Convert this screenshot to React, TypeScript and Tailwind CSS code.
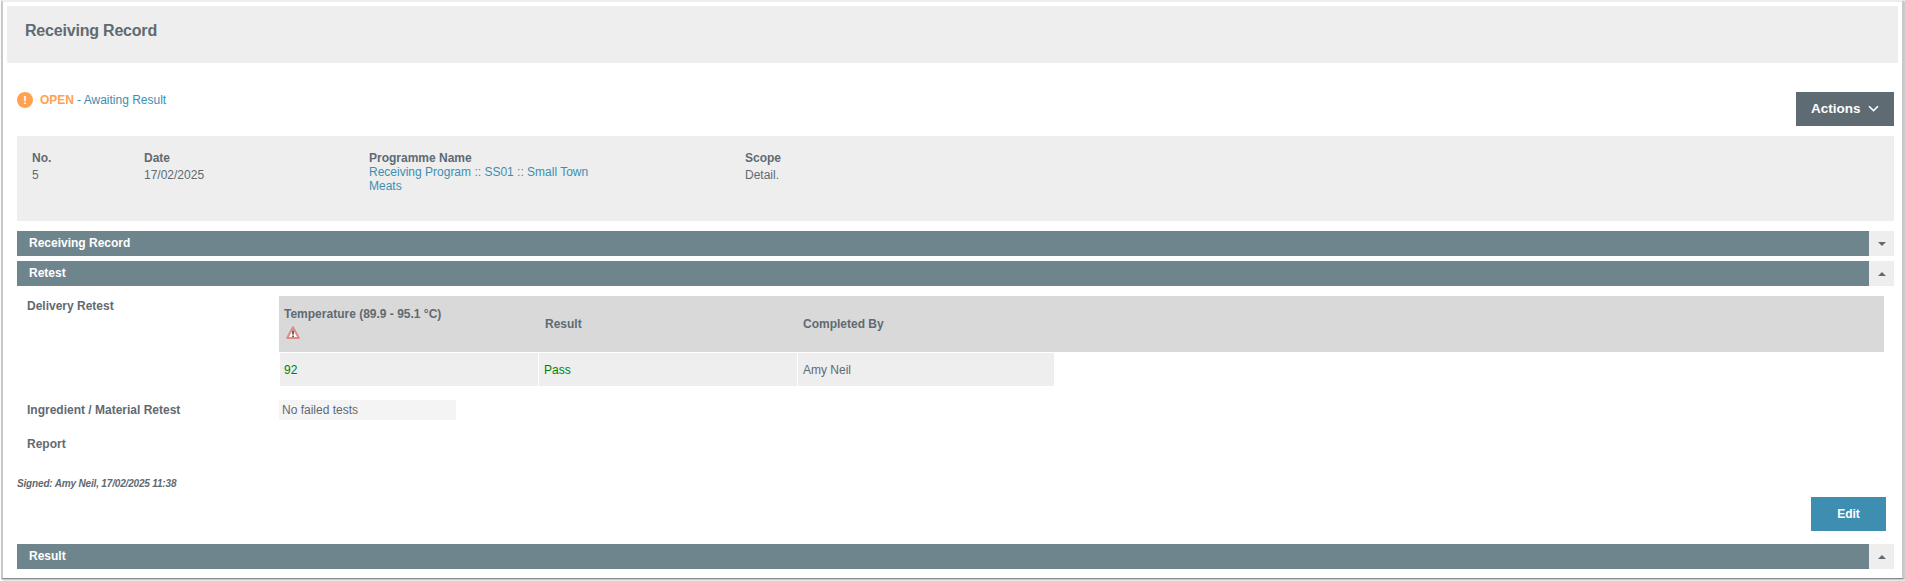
const BAR_ARROW = {
  up: "0,4 4,0 8,4",
  down: "0,0 8,0 4,4",
};

function SectionBar({
  title,
  arrow,
  className,
}: {
  title: string;
  arrow: "up" | "down";
  className: string;
}) {
  return (
    <div className={`flex h-[25px] ${className}`}>
      <div className="flex flex-1 items-center bg-[#6e858e] pb-px pl-3 text-xs font-bold text-white">
        {title}
      </div>
      <div className="flex w-[25px] items-center justify-center bg-[#eeeeee]">
        <svg width="8" height="4" viewBox="0 0 8 4" className="fill-[#5f6a72]">
          <polygon points={BAR_ARROW[arrow]} />
        </svg>
      </div>
    </div>
  );
}

function InfoColumn({
  label,
  width,
  children,
}: {
  label: string;
  width: string;
  children: React.ReactNode;
}) {
  return (
    <div className={`${width} shrink-0`}>
      <div className="h-[14px] leading-[14px] font-bold">{label}</div>
      {children}
    </div>
  );
}

export default function App() {
  return (
    <div className="h-[581px] w-[1905px] overflow-hidden bg-white font-['Liberation_Sans',Arial,sans-serif] text-xs text-[#5f6a72]">
      <div className="ml-px mr-px h-[579px] border-x-2 border-t-2 border-b border-x-[#c8c8c8] border-t-[#eeeeee] border-b-[#8a8a8a] pt-1 shadow-[1px_1px_2px_rgba(0,0,0,0.3)]">
        {/* Page title */}
        <div className="ml-1 mr-1 flex h-[57px] items-start bg-[#eeeeee] pl-[18px] pt-[15px] text-base leading-[20px] font-bold tracking-[-0.2px]">
          Receiving Record
        </div>

        <div className="ml-[14px] mr-2">
          {/* Status and actions */}
          <div className="mt-[29px] flex h-[34px] items-start justify-between">
            <div className="flex h-4 items-center">
              <span className="flex h-4 w-4 items-center justify-center rounded-full bg-[#ffa24f] text-[11px] font-bold text-white">
                !
              </span>
              <span className="ml-[7px] font-bold text-[#ffa24f]">OPEN</span>
              <span className="ml-[3px] text-[#3d8eb0]">- Awaiting Result</span>
            </div>
            <button
              type="button"
              className="flex h-[34px] w-[98px] items-center bg-[#5f6b73] pb-px pl-[15px] text-[13.5px] font-bold text-white"
            >
              Actions
              <svg
                width="11"
                height="7"
                viewBox="0 0 11 7"
                fill="none"
                stroke="currentColor"
                strokeWidth="1.6"
                className="ml-[7px]"
              >
                <path d="M1 1.2 5.5 5.6 10 1.2" />
              </svg>
            </button>
          </div>

          {/* Record details */}
          <div className="mt-[10px] flex h-[85px] bg-[#eeeeee] pl-[15px] pt-[15px]">
            <InfoColumn label="No." width="w-[112px]">
              <div className="mt-[2px]">5</div>
            </InfoColumn>
            <InfoColumn label="Date" width="w-[225px]">
              <div className="mt-[2px]">17/02/2025</div>
            </InfoColumn>
            <InfoColumn label="Programme Name" width="w-[376px]">
              <div className="w-[240px] leading-[14px] text-[#3d8eb0]">
                Receiving Program :: SS01 :: Small Town Meats
              </div>
            </InfoColumn>
            <InfoColumn label="Scope" width="w-[200px]">
              <div className="mt-[2px]">Detail.</div>
            </InfoColumn>
          </div>

          <SectionBar title="Receiving Record" arrow="down" className="mt-[10px]" />
          <SectionBar title="Retest" arrow="up" className="mt-[5px]" />

          {/* Retest content */}
          <div className="mt-[10px] flex">
            <div className="w-[262px] shrink-0 pl-[10px] pt-[2px] font-bold">Delivery Retest</div>
            <div className="mr-[10px] flex-1">
              <div className="flex h-[56px] items-center bg-[#d9d9d9] font-bold">
                <div className="w-[260px] self-start pl-[5px] pt-[10px]">
                  <div>Temperature (89.9 - 95.1 °C)</div>
                  <svg width="14" height="13" viewBox="0 0 14 13" className="mt-[4px] ml-[2px]">
                    <path
                      d="M7 1.2 12.8 12H1.2Z"
                      fill="#ffffff"
                      stroke="#e08a84"
                      strokeWidth="2"
                      strokeLinejoin="round"
                    />
                    <path d="M7 4.5V8.5M7 9.5V11" stroke="#3f3f3f" strokeWidth="1.6" />
                  </svg>
                </div>
                <div className="w-[259px] pl-[6px]">Result</div>
                <div className="pl-[5px]">Completed By</div>
              </div>
              <div className="mt-px flex h-[33px] w-[775px] gap-px pl-px">
                <div className="flex w-[258px] items-center bg-[#eeeeee] pl-1 text-[#008000]">92</div>
                <div className="flex w-[258px] items-center bg-[#eeeeee] pl-[5px] text-[#008000]">Pass</div>
                <div className="flex flex-1 items-center bg-[#eeeeee] pl-[5px]">Amy Neil</div>
              </div>
            </div>
          </div>

          <div className="mt-[14px] flex h-5 items-center">
            <div className="w-[262px] shrink-0 pl-[10px] font-bold">Ingredient / Material Retest</div>
            <div className="flex h-5 w-[177px] items-center bg-[#f4f4f4] pl-[3px]">No failed tests</div>
          </div>
          <div className="mt-4 pl-[10px] font-bold">Report</div>

          <div className="mt-[25px] h-[14px] text-[10px] leading-[14px] font-bold tracking-[-0.17px] italic">
            Signed: Amy Neil, 17/02/2025 11:38
          </div>

          <div className="mr-2 flex justify-end">
            <button
              type="button"
              className="mt-[6px] h-[34px] w-[75px] bg-[#3d8eb0] text-xs font-bold text-white"
            >
              Edit
            </button>
          </div>

          <SectionBar title="Result" arrow="up" className="mt-[13px]" />
        </div>
      </div>
    </div>
  );
}
